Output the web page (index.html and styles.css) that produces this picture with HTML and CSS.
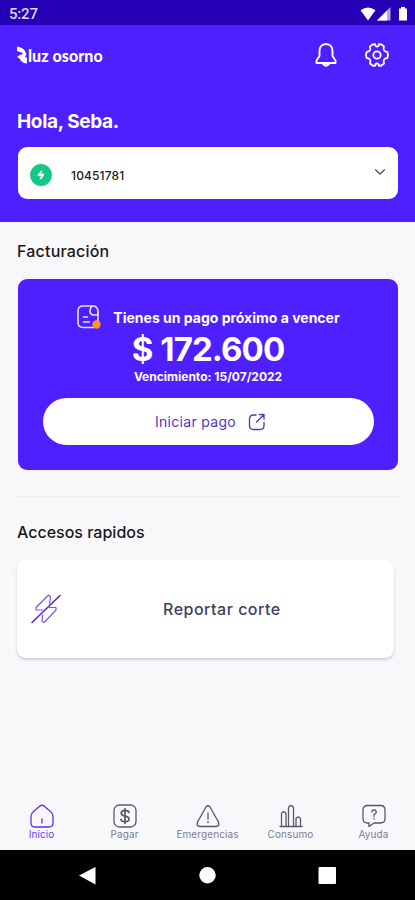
FILE: index.html
```html
<!DOCTYPE html>
<html lang="es">
<head>
<meta charset="utf-8">
<title>Luz Osorno</title>
<link rel="stylesheet" href="styles.css">
</head>
<body>
<div class="app">
  <div class="status">
    <span class="clock">5:27</span>
    <svg width="50" height="16" viewBox="0 0 50 16" fill="#fff"><path d="M1.500 4.200Q9 -1 16.500 4.200L9 14.500Z"/><path d="M31.500 1V14.500H18Z" opacity=".65"/><path d="M28 4.500V14.500H18Z"/><path d="M40 2.500h2V1h4v1.500h2V14.500h-8z"/></svg>
  </div>
  <header class="hero">
    <div class="appbar">
      <div class="brand">
        <svg width="12" height="18" viewBox="0 0 12 18" fill="#fff"><path d="M0 .5Q8 1.500 9.500 8.500L7.500 9Q5 6 0 5Z"/><path d="M0 11Q4 7 9 8.500L8 11.500Q3.500 14 0 11Z"/><path d="M2.500 12.500Q6.500 10 10 11.500V17.500Q5 17.500 2.500 12.500Z"/></svg>
        <span class="brand-name">luz osorno</span>
      </div>
      <svg class="bell" width="24" height="26" viewBox="0 0 24 26" fill="none" stroke="#fff" stroke-width="1.900" stroke-linejoin="round"><path d="M12 2C7.500 2 5.500 5.500 5.500 9V14L2.500 18.500V21H21.500V18.500L18.500 14V9C18.500 5.500 16.500 2 12 2Z"/><path d="M8.500 21.500Q12 26 15.500 21.500Z"/></svg>
      <svg width="26" height="26" viewBox="0 0 26 26" fill="none" stroke="#fff" stroke-width="1.800" stroke-linejoin="round"><path d="M8.500 2.500L11.100 2.200Q11.400 4.700 13 4.700T14.900 2.200L17.500 2.500L20 4.500Q19 7.500 20.200 8.700T23.300 9.800L24 13L23.300 16.200Q21.200 16.200 20.200 17.300T20 21.500L17.500 23.500L14.900 23.800Q14.600 21.300 13 21.300T11.100 23.800L8.500 23.500L6 21.500Q7 18.500 5.800 17.300T2.700 16.200L2 13L2.700 9.800Q4.800 9.800 5.800 8.700T6 4.500Z"/><circle cx="13" cy="13" r="3.700"/></svg>
    </div>
    <h1 class="hello">Hola, Seba.</h1>
    <div class="select">
      <svg width="24" height="24" viewBox="0 0 24 24"><circle cx="12" cy="12" r="10.900" fill="#14c784"/><path d="M12.800 8L9.500 12.300L14.300 11.500L11.300 16" fill="none" stroke="#fff" stroke-width="1.800" stroke-linejoin="round"/></svg>
      <span class="account">10451781</span>
      <svg width="12" height="8" viewBox="0 0 12 8" fill="none" stroke="#555" stroke-width="1.400"><path d="M1.200 1.500L6 6L10.800 1.500"/></svg>
    </div>
  </header>
  <main class="content">
    <h2 class="title billing">Facturación</h2>
    <section class="bill">
      <div class="notice">
        <svg width="26" height="26" viewBox="0 0 26 26" fill="none" stroke="#e8e2ff" stroke-width="1.600" stroke-linecap="round" stroke-linejoin="round"><path d="M18 23.500H7Q2 23.500 2 18.500V7Q2 2 7 2H18Q22 3 22 8V18"/><path d="M22 8V11H18Q14 11 14 7Q14 4 16 2"/><path d="M7.500 13h4M7.500 18h6"/><circle cx="20.500" cy="20.500" r="4.200" fill="#ff9716" stroke="none"/></svg>
        <span class="notice-text">Tienes un pago próximo a vencer</span>
      </div>
      <div class="amount">$ 172.600</div>
      <div class="due">Vencimiento: 15/07/2022</div>
      <div class="pay"><span class="pay-text">Iniciar pago</span>
        <svg width="18" height="18" viewBox="0 0 18 18" fill="none" stroke="#5035c8" stroke-width="1.300" stroke-linecap="round" stroke-linejoin="round"><path d="M8 2H5.500Q1.500 2 1.500 6V12.500Q1.500 16.500 5.500 16.500H12Q16 16.500 16 12.500V9.500M8.500 9L16 1.500M11.500 1.500H16V6"/></svg>
      </div>
    </section>
    <hr class="rule">
    <h2 class="title quick">Accesos rapidos</h2>
    <section class="report">
      <svg width="30" height="30" viewBox="0 0 30 30" fill="none" stroke="#7558ec" stroke-width="1.200" stroke-linejoin="round" stroke-linecap="round"><path d="M1 28.500L29 1.500" stroke="#4a28dc" stroke-width="1.500"/><path d="M18.500 10L19.500 2.500L17.500 1L5 13.500V16H12"/><path d="M18.500 13.500H25V16L13 28.500L11 27.500L11.500 21"/></svg>
      <span class="report-text">Reportar corte</span>
    </section>
  </main>
  <nav class="tabs">
    <div class="tab active">
      <svg width="26" height="26" viewBox="0 0 26 26"><path d="M5 8L11 3Q13 1.500 15 3L21 8Q24 10.500 24 13V20Q24 24 20 24H6Q2 24 2 20V13Q2 10.500 5 8ZM13 16V20"/></svg>
      <span>Inicio</span>
    </div>
    <div class="tab">
      <svg width="26" height="26" viewBox="0 0 26 26"><rect x="2" y="2" width="22" height="22" rx="5.500"/><path stroke-width="1.700" d="M17 9.500Q16.500 7.300 13 7.300T9.200 10Q9.200 12.500 13 13T17 16Q17 18.700 13 18.700T9 16.300M13 5.500V20.500"/></svg>
      <span>Pagar</span>
    </div>
    <div class="tab">
      <svg width="26" height="26" viewBox="0 0 26 26"><path d="M11 4Q13 1.500 15 4L23.500 19Q25 23.500 21 23.500H5Q1 23.500 2.500 19ZM13 10V16M13 18.500V19.500"/></svg>
      <span>Emergencias</span>
    </div>
    <div class="tab">
      <svg width="26" height="26" viewBox="0 0 26 26"><path d="M2 23.500H24M3.500 23.500V10.500Q5.500 7 8 10.500V23.500M10.500 23.500V4.500Q13 .5 15.500 4.500V23.500M18 23.500V15.500Q20.200 12.500 22.500 15.500V23.500"/></svg>
      <span>Consumo</span>
    </div>
    <div class="tab">
      <svg width="26" height="26" viewBox="0 0 26 26"><path d="M6.500 2.500H19.500Q24 2.500 24 7V15.500Q24 20 19.500 20H13L8 23.500V20H6.500Q2 20 2 15.500V7Q2 2.500 6.500 2.500ZM10.800 9Q10.800 7 13 7T15.300 9Q15.300 10.300 13 11.800V13.300M13 15.300V16"/></svg>
      <span>Ayuda</span>
    </div>
  </nav>
  <div class="system">
    <svg width="415" height="50" viewBox="0 0 415 50" fill="#fff"><path d="M79 25.500L95.500 17V34.500Z"/><circle cx="207.500" cy="25.200" r="8.200"/><rect x="318.500" y="17" width="17.500" height="17" rx="1"/></svg>
  </div>
</div>
</body>
</html>
```
FILE: styles.css
```css
* { box-sizing: border-box; }
body { margin: 0; font-family: Inter, "Liberation Sans", sans-serif; }
h1, h2 { margin: 0; }
svg { display: block; flex: none; }
span { white-space: nowrap; }
.app { width: 415px; height: 900px; display: flex; flex-direction: column; background: #f8f8fb; overflow: hidden; }
.status { height: 25px; background: #2500b4; display: flex; align-items: center; justify-content: space-between; padding: 2px 6px 0 9px; }
.clock { color: #dcd8f8; font: 500 15px/20px Roboto, sans-serif; letter-spacing: -.2px; }
.hero { height: 197px; background: #4e1fff; padding: 0 17px; }
.appbar { height: 60px; display: flex; align-items: center; padding-right: 8px; }
.brand { display: flex; align-items: center; flex: 1; color: #fff; }
.brand svg { margin-right: -1px; }
.brand-name { font: 900 16px/20px Lato, sans-serif; letter-spacing: .05px; padding-top: 2px; }
.bell { margin-right: 26px; }
.hello { margin-top: 25px; height: 24px; font-size: 19px; line-height: 24px; font-weight: 700; letter-spacing: -.35px; color: #fff; }
.select { margin: 13px 0 0 1px; width: 380px; height: 52px; background: #fff; border-radius: 9px; display: flex; align-items: center; padding: 4px 12px 0 11px; }
.account { margin-left: 18px; flex: 1; font-size: 12px; font-weight: 500; letter-spacing: .15px; color: #222; }
.select svg:last-child { margin-top: -6px; }
.content { flex: 1; padding: 0 17px; }
.title { font-size: 16px; line-height: 20px; font-weight: 500; color: #191919; }
.billing { padding-top: 19px; letter-spacing: .2px; }
.bill { margin: 18px 0 0 1px; width: 380px; height: 191px; border-radius: 9px; background: #4e1fff; color: #fff; padding-top: 25px; display: flex; flex-direction: column; align-items: center; }
.notice { display: flex; align-items: center; gap: 11px; height: 26px; }
.notice-text { font-size: 14px; font-weight: 700; }
.amount { height: 38px; line-height: 38px; font-size: 33px; font-weight: 700; letter-spacing: -.9px; word-spacing: 1px; }
.due { height: 18px; line-height: 18px; font-size: 12px; font-weight: 700; }
.pay { margin-top: 12px; width: 331px; height: 47px; border-radius: 24px; background: #fff; color: #5134c8; display: flex; align-items: center; justify-content: center; gap: 12px; font-size: 14px; letter-spacing: .3px; padding-left: 5px; }
.rule { margin: 26px -1px 0; height: 1px; border: 0; background: #efeff3; }
.quick { padding-top: 25px; }
.report { margin-top: 18px; width: 377px; height: 98px; border-radius: 9px; background: #fff; box-shadow: 0 2px 3px #cdd0d8; display: flex; align-items: center; padding-left: 14px; }
.report-text { margin-left: 102px; font-size: 16px; font-weight: 500; letter-spacing: .5px; color: #41405f; }
.tabs { height: 47px; display: grid; grid-template-columns: repeat(5, 1fr); }
.tab { display: flex; flex-direction: column; align-items: center; font-size: 10px; line-height: 11px; letter-spacing: .1px; color: #7e7e92; }
.tab svg { fill: none; stroke: #58566e; stroke-width: 1.300; stroke-linejoin: round; stroke-linecap: round; }
.tab.active { color: #6046ee; }
.tab.active svg { stroke: #5735e6; }
.system { height: 50px; background: #000; }
```
